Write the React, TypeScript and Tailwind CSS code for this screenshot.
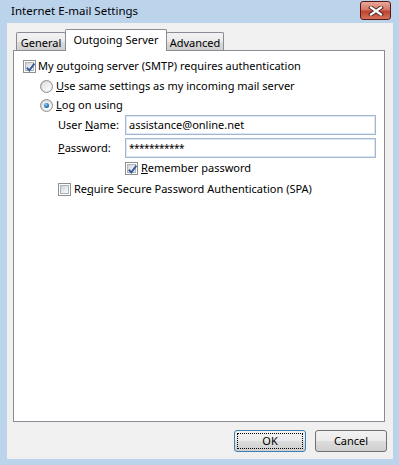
import React from "react";

function CheckBox({ checked }: { checked?: boolean }) {
  return (
    <span className="relative shrink-0 w-[13px] h-[13px] border border-[#8e8f8f] bg-white p-px flex">
      <span className="flex-1 border border-[#aeb4bb] bg-[linear-gradient(135deg,#cfd3d8_0%,#e9ebee_55%,#f8f8f8_100%)]" />
      {checked && (
        <svg
          className="absolute left-[1px] top-[1px]"
          width="11"
          height="11"
          viewBox="0 0 11 11"
        >
          <path
            d="M1.8 5.6 L4.3 8.4 L9.4 1.6"
            fill="none"
            stroke="#3b5a9a"
            strokeWidth="1.9"
          />
        </svg>
      )}
    </span>
  );
}

function Radio({ checked }: { checked?: boolean }) {
  return (
    <span className="shrink-0 w-[13px] h-[13px] rounded-full border border-[#8e8f8f] bg-[linear-gradient(135deg,#c8ccd2,#f6f6f6)] flex items-center justify-center">
      <span className="w-[9px] h-[9px] rounded-full bg-[linear-gradient(135deg,#e0e2e5,#fbfbfb)] flex items-center justify-center">
        {checked && (
          <span className="w-[5px] h-[5px] rounded-full bg-[radial-gradient(circle_at_40%_35%,#8ed0f5_0%,#2a73b8_55%,#0e3d78_100%)]" />
        )}
      </span>
    </span>
  );
}

function Tab({ label, width, active }: { label: string; width: string; active?: boolean }) {
  if (active) {
    return (
      <div className={`relative z-10 -ml-px ${width} h-[22px] -mb-px bg-white border border-b-0 border-[#898c95] rounded-t-[2px] flex justify-center pt-[3px]`}>
        <span className="leading-[14px]">{label}</span>
      </div>
    );
  }
  return (
    <div className={`-ml-px first:ml-0 ${width} h-[18px] border border-b-0 border-[#898c95] rounded-t-[2px] bg-[linear-gradient(to_bottom,#f2f2f2_0%,#ebebeb_50%,#dddddd_50%,#cfcfcf_100%)] flex justify-center pt-[3px]`}>
      <span className="leading-[14px]">{label}</span>
    </div>
  );
}

export default function App() {
  return (
    <div className="w-[399px] h-[465px] bg-[#bcd3ec] flex flex-col pl-[7px] pr-[6px] pb-[6px] text-[11px] text-black font-['Noto_Sans',sans-serif]">
      {/* title bar */}
      <div className="h-[23px] flex items-start">
        <span className="ml-[4px] mt-[4px] leading-[14px] text-[11.5px]">Internet E-mail Settings</span>
        <div className="ml-auto mr-[2px] mt-[1px] w-[31px] h-[19px] rounded-[3px] border border-[#5a1a14] bg-[linear-gradient(to_bottom,#e9a899_0%,#d47766_45%,#c2412c_55%,#d2735d_100%)] flex items-center justify-center">
          <svg width="16" height="10" viewBox="0 0 16 10">
            <path d="M3 1.5 L13 8.5 M13 1.5 L3 8.5" stroke="#4a2420" strokeWidth="4" strokeLinecap="square" />
            <path d="M3 1.5 L13 8.5 M13 1.5 L3 8.5" stroke="#ffffff" strokeWidth="2.2" strokeLinecap="square" />
          </svg>
        </div>
      </div>

      {/* client area */}
      <div className="flex-1 bg-[#f0f0f0] flex flex-col pl-[6px] pr-[8px] pt-[6px]">
        <div className="h-[21px] flex items-end pl-[3px]">
          <Tab label="General" width="w-[50px]" />
          <Tab label="Outgoing Server" width="w-[102px]" active />
          <Tab label="Advanced" width="w-[58px]" />
        </div>

        <div className="h-[372px] bg-white border border-[#898c95] flex flex-col pt-[5px]">
          <div className="h-[20px] flex items-center pl-[9px] gap-[2px]">
            <CheckBox checked />
            <span>
              My <span className="underline">o</span>utgoing server (SMTP) requires authentication
            </span>
          </div>
          <div className="h-[20px] flex items-center pl-[26px] gap-[3px]">
            <Radio />
            <span>
              <span className="underline">U</span>se same settings as my incoming mail server
            </span>
          </div>
          <div className="h-[19px] flex items-center pl-[26px] gap-[3px]">
            <Radio checked />
            <span>
              <span className="underline">L</span>og on using
            </span>
          </div>

          <div className="h-[20px] flex items-center pl-[44px]">
            <span className="w-[67px]">
              User <span className="underline">N</span>ame:
            </span>
            <div className="w-[251px] h-[20px] border border-[#a3b6cf] shadow-[inset_0_0_0_1px_#dde8f5] flex items-center pl-[3px]">
              assistance@online.net
            </div>
          </div>
          <div className="mt-[3px] h-[20px] flex items-center pl-[44px]">
            <span className="w-[67px]">
              <span className="underline">P</span>assword:
            </span>
            <div className="w-[251px] h-[20px] border border-[#a3b6cf] shadow-[inset_0_0_0_1px_#dde8f5] flex items-center pl-[3px] text-[10px] tracking-[-0.5px]">
              ***********
            </div>
          </div>
          <div className="h-[21px] flex items-center pl-[111px] gap-[3px]">
            <CheckBox checked />
            <span>
              <span className="underline">R</span>emember password
            </span>
          </div>
          <div className="h-[21px] flex items-center pl-[44px] gap-[3px]">
            <CheckBox />
            <span>
              Re<span className="underline">q</span>uire Secure Password Authentication (SPA)
            </span>
          </div>
        </div>

        <div className="mt-[8px] -mr-[2px] flex justify-end gap-[9px]">
          <button className="w-[72px] h-[22px] rounded-[3px] border border-[#3c7fb1] bg-[linear-gradient(to_bottom,#f2f2f2_0%,#ebebeb_50%,#dddddd_50%,#cfcfcf_100%)] p-[2px] flex">
            <span className="flex-1 border border-dotted border-black flex items-center justify-center leading-[14px]">
              OK
            </span>
          </button>
          <button className="w-[72px] h-[22px] rounded-[3px] border border-[#707070] bg-[linear-gradient(to_bottom,#f2f2f2_0%,#ebebeb_50%,#dddddd_50%,#cfcfcf_100%)] flex items-center justify-center leading-[14px]">
            Cancel
          </button>
        </div>
      </div>
    </div>
  );
}
